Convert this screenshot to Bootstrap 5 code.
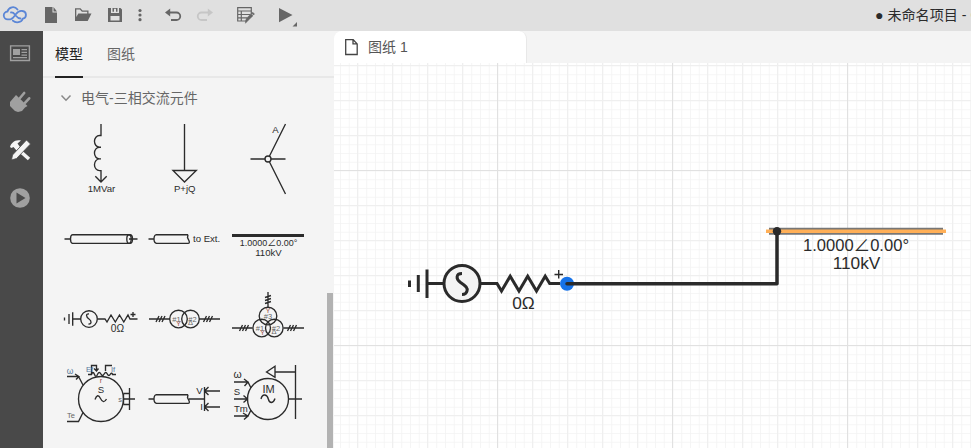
<!DOCTYPE html>
<html lang="zh-CN">
<head>
<meta charset="utf-8">
<title>未命名项目</title>
<link href="https://cdn.jsdelivr.net/npm/bootstrap@5.3.0/dist/css/bootstrap.min.css" rel="stylesheet">
<style>
body{font-family:"Liberation Sans","Noto Sans CJK SC",sans-serif;font-size:14px;line-height:20px;width:971px;height:448px;color:#333}
svg{display:block;flex:none;overflow:visible}
.topbar{height:31px;background:#e0e0e0}
.topbar .tools svg{color:#666}
.doc-title{left:875px;top:5px;font-size:14.1px;color:#2b2b2b}
.siderail{width:43px;background:#494949}
.library{width:291px;background:#f4f4f4}
.lib-tabs{height:47px;padding:0 12px;gap:24px;border-bottom:2px solid #e8e8e8}
.lib-tabs a{color:#666;text-decoration:none;height:47px;line-height:47px;border-bottom:2px solid transparent}
.lib-tabs a.current{color:#222;border-color:#222}
.group-title{height:41px;padding:0 0 2px 18px;gap:10px;color:#666}
.symbols{display:grid;grid-template-columns:84px 83px 84px;margin-left:16px}
.sheet-tabs{height:32px;background:#f4f4f4}
.sheet-tab{width:193px;background:#fff;border-radius:8px 8px 0 0;border-right:1px solid #e8e8e8;color:#555;padding-left:11px;gap:10px}
.thumb{left:284px;top:262px;width:6px;height:155px;background:#b2b2b2}
.ink{fill:none;stroke:#2b2b2b;stroke-width:1.35}
.ink text,.wires text{fill:#2b2b2b;stroke:none;font-size:9.6px;text-anchor:middle}
.ink .tiny{font-size:7.5px;fill:#666}
.ink .blue{fill:#56789a}.ink .brown{fill:#a0564a}
.ink .left{text-anchor:start}
.wires text{font-size:17.3px}
</style>
<script src="https://cdn.jsdelivr.net/npm/bootstrap@5.3.0/dist/js/bootstrap.bundle.min.js"></script>
</head>
<body class="d-flex flex-column overflow-hidden">
<header class="topbar position-relative flex-shrink-0 overflow-hidden">
 <div class="tools">
 <svg width="300" height="31" viewBox="0 0 300 31" fill="currentColor">
  <path d="M10.500 19.300H7.800a3.900 3.900 0 0 1-.3-7.800A5.600 5.600 0 0 1 17.500 9.500M10.500 19.300c2.500-.5 3.800-3 5.500-5.300s4-3.600 6.500-3a3.900 3.900 0 0 1 .3 7.700C21.500 22.500 16 23.500 12.800 20.600M11 12.500c2.500-.5 3.200 1.200 4.500 2.800s2.500 3.200 5 3.200" fill="none" stroke="#5b86d6" stroke-width="1.800" stroke-linecap="round"/>
  <path d="M45 7h7.500v5.500H57V23H45zM53.500 7l3.500 4.500h-3.500z"/>
  <path d="M75 20.500V8.300h5.500l2 2.200h6v3h-1.300v-1.700h-5.300l-2-2.200h-3.600V17l2-3.500h13.200L87.700 21H75z"/>
  <path fill-rule="evenodd" d="M108 8h3v5h8V8h1.500l1.500 1.500V22h-14zm4.500 0h5v3.800h-1.500V8.800H114v3h-1.500zM110.500 16v4.500h9V16z"/>
  <circle cx="140" cy="10.500" r="1.600"/><circle cx="140" cy="15" r="1.600"/><circle cx="140" cy="19.700" r="1.600"/>
  <path d="M168 12.500h8.500a3.700 3.700 0 0 1 0 7.500H171" fill="none" stroke="currentColor" stroke-width="1.800"/><path d="M165 12.500l5.200-4v8z"/>
  <g fill="#c6c6c6"><path d="M210 12.500h-8.500a3.700 3.700 0 0 0 0 7.500H207" fill="none" stroke="#c6c6c6" stroke-width="1.800"/><path d="M213 12.500l-5.200-4v8z"/></g>
  <path d="M246 21h-8.300V7.700h13.600V14M237.700 11h13.600M237.700 14.500h12.500M237.700 17.800h9.500M241.300 11v10" fill="none" stroke="currentColor" stroke-width="1.200"/>
  <path d="M245.500 21l1-2.700 4.500-4.500 2 2-4.700 4.500-2.800 3zM251.700 13.200l1-1 1.800 1.800-1 1z" stroke="currentColor" stroke-width=".5"/>
  <path d="M279 8v14.300l13.500-7.200zM297 22v4.500h-4.500z"/>
 </svg>
 </div>
 <div class="doc-title position-absolute text-nowrap">● 未命名项目 - <span style="color:#9a4a30">C</span></div>
</header>
<div class="d-flex flex-grow-1">
 <nav class="siderail flex-shrink-0">
 <svg width="43" height="417" viewBox="0 31 43 417" fill="#a0a0a0">
  <path d="M10.600 45.900h18.800v14.600H10.600z" fill="none" stroke="#a0a0a0" stroke-width="1.400"/>
  <path d="M13 49h7v6h-7zM21.500 49H27v1.300h-5.500zM21.500 51.800H27v1.300h-5.500zM21.500 54.500H27v1.300h-5.500zM13 57h14v1.300H13z"/>
  <path d="M16 95l11.500 11-2.500 1.500-3 3.500-4 1-3-1-5-5v-4l3-3.500z"/>
  <path d="M20 98l4.200-5M25 102.800l4.200-4.500" stroke="#a0a0a0" stroke-width="2.600" stroke-linecap="round"/>
  <path d="M10 147c1-4 5-8 11-6.500l-3.500 3 2.500 3.500-3.500 3.500-3-3.500-2 1z" fill="#f4f4f4"/>
  <path d="M20 151l9 8" stroke="#f4f4f4" stroke-width="3.500"/>
  <path d="M26.500 140l4 4-14 14.500-5 1.500 1-5z" fill="#f4f4f4" stroke="#494949" stroke-width=".8"/>
  <circle cx="20" cy="198" r="9.800"/><path d="M16.500 192.500v11l9-5.500z" fill="#494949"/>
 </svg>
 </nav>
 <aside class="library flex-shrink-0 position-relative">
  <div class="lib-tabs d-flex"><a class="current" href="#">模型</a><a href="#">图纸</a></div>
  <div class="group-title d-flex align-items-center"><svg width="10" height="8" viewBox="0 0 10 8"><path d="M.500 1.500L5 6.200 9.500 1.500" fill="none" stroke="#888" stroke-width="1.500"/></svg><span>电气-三相交流元件</span></div>
  <div class="symbols">
   <svg class="ink" width="84" height="80" viewBox="59 119 84 80"><path d="M101 124v11.500h-1.500a5 5.800 0 0 0 0 11.700H101h-1.500a5 5.800 0 0 0 0 11.700H101h-1.500a5 5.800 0 0 0 0 11.700H101V182M95.300 176.300l5.700 5.700 5.700-5.700"/><text x="101.500" y="192">1MVar</text></svg>
   <svg class="ink" width="84" height="80" viewBox="143 119 84 80"><path d="M184.500 124v46.500M173 170.500h23.300L184.500 182z"/><text x="184.700" y="192">P+jQ</text></svg>
   <svg class="ink" width="84" height="80" viewBox="226 119 84 80"><path d="M250.500 159H265M271 159h14.500M269.500 156l16-32M269.500 162l16 32"/><circle cx="268" cy="159" r="3"/><text x="275.500" y="133">A</text></svg>

   <svg class="ink" width="84" height="80" viewBox="59 199 84 80"><path d="M64.500 239H70M129 239h8.500M72.500 234.700h57.500q2.500 0 2.500 4.300t-2.500 4.300H72.500q-2-.5-2-4.300t2-4.300"/><ellipse cx="129" cy="239" rx="2.200" ry="4.300"/></svg>
   <svg class="ink" width="84" height="80" viewBox="143 199 84 80"><path d="M148.500 239h5.500M188 234.700h-31.500q-2.500.5-2.500 4.300t2.500 4.300H188q2 0 1-2.500l-1.500-3.200.5-2.900"/><text class="left" x="193" y="242">to Ext.</text></svg>
   <svg class="ink" width="84" height="80" viewBox="226 199 84 80"><path d="M232 235.500h72" stroke-width="3"/><text x="268.500" y="246" textLength="57.500" lengthAdjust="spacingAndGlyphs">1.0000∠0.00°</text><text x="268.500" y="256">110kV</text></svg>

   <svg class="ink" width="84" height="80" viewBox="59 279 84 80"><path d="M64.500 317.500v3M69 314v10M72.700 312.300v13.400M72.700 319h8M97.500 319h7.500l2 3 4-7 4.300 7 4.200-7 4.300 7 4.200-7 2 4h7.500"/><circle cx="89" cy="319" r="8.300"/><path d="M89 314c-3.500-.5-3 3 0 5s2.500 5.500-.5 5M130.500 314.500h5M133 312v5"/><text x="117.500" y="332" style="font-size:10.200px">0Ω</text></svg>
   <svg class="ink" width="84" height="80" viewBox="143 279 84 80"><path d="M149 319h20.700M199.300 319H220M156 322l3-6M159 322l3-6M162 322l3-6M203.500 322l3-6M206.500 322l3-6M209.500 322l3-6"/><circle cx="178.500" cy="319" r="8.800"/><circle cx="190.500" cy="319" r="8.800"/><text class="tiny" x="176.500" y="322">#1</text><text class="tiny" x="192.500" y="322">#2</text><text class="tiny brown" x="178.500" y="326">Y</text><text class="tiny" x="190.500" y="325">Δ</text></svg>
   <svg class="ink" width="84" height="80" viewBox="226 279 84 80"><path d="M232 328h20.500M283.500 328H304M268 292v15M265 297.500l6-2M265 300.500l6-2M265 303.500l6-2M239.500 331l3-6M242.500 331l3-6M245.500 331l3-6M287.500 331l3-6M290.500 331l3-6M293.500 331l3-6"/><circle cx="268" cy="316" r="8.800"/><circle cx="261.700" cy="328" r="8.800"/><circle cx="274.300" cy="328" r="8.800"/><text class="tiny" x="268" y="319">#3</text><text class="tiny brown" x="268" y="313">Y</text><text class="tiny" x="260" y="331">#1</text><text class="tiny" x="276" y="331">#2</text><text class="tiny brown" x="262.500" y="335">Y</text><text class="tiny" x="274" y="334">Δ</text></svg>

   <svg class="ink" width="84" height="80" viewBox="59 359 84 80"><circle cx="101" cy="399" r="22.500"/><path d="M67 376.500h11.500l4.500 8.500M75 374l4 2.500-3 3M67 421.500h11.500l4.500-9M123.500 399H135M129.500 388v22M123.500 393.500h6M123.500 404.500h6M123.500 393.500v11M88 374.500h3.500q1.500-4 3 0t3.200-.5q1.500-3 3.200 0t3.200 0q1.700-3 3.200 0t3.200 0q1.500-2 2 .5h3.500M91.500 374.500v-9h5V371M105.500 371v-5.500h6.500M94 368.500l2.500 2.500 2-2.500M95 399.500q2.500-7 5.500-1t6 .5"/><text x="101" y="393">S</text><text class="tiny brown" x="101" y="383">r</text><text class="tiny" x="120" y="402">s</text><text class="tiny blue" x="70" y="373.500" style="font-size:8.500px">ω</text><text class="tiny" x="71" y="418">Te</text><text class="tiny blue" x="89.500" y="372">Ef</text><text class="tiny blue" x="113" y="372">If</text></svg>
   <svg class="ink" width="84" height="80" viewBox="143 359 84 80"><path d="M148.500 399h5.500M188 394.700h-31.500q-2.500.5-2.500 4.300t2.500 4.300H188q2 0 1-2.500l-1.500-3.200.5-2.900M189 399h15.500M204.500 387v24M204.500 391H220M208.500 387l-4 4 4 4M204.500 407H220M208.500 403l-4 4 4 4"/><text x="199.500" y="394">V</text><text x="201.500" y="410">I</text></svg>
   <svg class="ink" width="84" height="80" viewBox="226 359 84 80"><circle cx="268" cy="399" r="20.500"/><path d="M288.500 399H302M295.500 365v54M295.500 372H275M266.500 372l8.500-5.700v11zM234 382h14l3 6M244 379l4 3-3.500 4M234 399h13.500M243.500 395.500l4 3.500-4 3.500M234 416h14l3-6M243 413l5 3-4 3.500M261 399q1-4.500 4-4 2.500.5 3.300 4t3.200 3.500q2.500-.5 3.500-4"/><text x="268.500" y="393" style="font-size:11px">IM</text><text x="237.500" y="378" style="font-size:10.500px">ω</text><text x="237" y="395">S</text><text class="left" x="234" y="412">Tm</text></svg>
  </div>
  <div class="thumb position-absolute"></div>
 </aside>
 <main class="flex-grow-1">
  <div class="sheet-tabs d-flex"><div class="sheet-tab d-flex align-items-center"><svg width="13" height="17" viewBox="0 0 13 17"><path d="M.700.700h7.500l4 4.200V15.500H.700zM8 .7v4.200h4" fill="none" stroke="#444" stroke-width="1.300"/></svg><span>图纸 1</span></div></div>
  <svg class="wires" width="637" height="385" viewBox="334 63 637 385">
   <defs>
    <pattern id="fine" x="497.500" y="170.500" width="8.750" height="8.750" patternUnits="userSpaceOnUse"><path d="M0 0H8.750M0 0V8.750" stroke="#f3f3f3" stroke-width="1.600"/></pattern>
    <pattern id="mid" x="497" y="170" width="35" height="35" patternUnits="userSpaceOnUse"><path d="M0 .5H35M.5 0V35" stroke="#efefef"/></pattern>
    <pattern id="major" x="497" y="170" width="175" height="175" patternUnits="userSpaceOnUse"><path d="M0 .5H175M.5 0V175" stroke="#e1e1e1"/></pattern>
   </defs>
   <rect x="334" y="63" width="637" height="385" fill="#fff"/>
   <rect x="334" y="63" width="637" height="385" fill="url(#fine)"/>
   <rect x="334" y="63" width="637" height="385" fill="url(#mid)"/>
   <rect x="334" y="63" width="637" height="385" fill="url(#major)"/>
   <g fill="none" stroke="#2b2b2b" stroke-width="3">
    <path d="M409.500 280.500v6.500M418.300 275v17M427 269.500v28.500M427 283.500h17.500M480.500 283.500h16.500l4.500 7.500 8.700-14.800 8.800 14.800 8.700-14.800 8.800 14.800 8.700-14.800 4.500 7.300H560"/>
    <circle cx="462" cy="283.500" r="18" fill="#f4f4f4"/>
    <path d="M462 273.500c-6 0-6.500 5.500-1.500 9s7.500 5 6.500 8.500c-.5 2.500-2.500 3.500-5 3.500"/>
    <path d="M554.500 274.500h8.500M558.700 270v8.500" stroke-width="1.400"/>
   </g>
   <circle cx="567" cy="283.700" r="7" fill="#1672e8"/>
   <path d="M769 231.300h174" stroke="#777" stroke-width="7"/><path d="M766 231.300h180" stroke="#ffaf57" stroke-width="3.500"/>
   <path d="M567 283.700h210v-52" fill="none" stroke="#2b2b2b" stroke-width="3.500" stroke-linecap="round" stroke-linejoin="round"/>
   <circle cx="777" cy="231.300" r="4.200" fill="#2b2b2b"/>
   <text x="523.500" y="309">0Ω</text><text x="856" y="251" textLength="106" lengthAdjust="spacingAndGlyphs">1.0000∠0.00°</text><text x="856.500" y="269">110kV</text>
  </svg>
 </main>
</div>
</body>
</html>
